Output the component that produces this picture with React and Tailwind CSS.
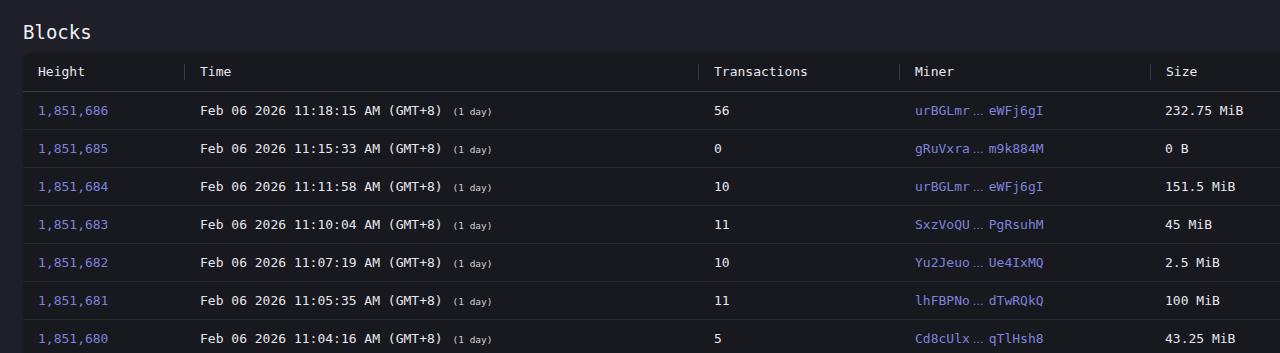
const blocks = [
  { height: '1,851,686', time: 'Feb 06 2026 11:18:15 AM (GMT+8)', txs: '56', minerA: 'urBGLmr', minerB: 'eWFj6gI', size: '232.75 MiB' },
  { height: '1,851,685', time: 'Feb 06 2026 11:15:33 AM (GMT+8)', txs: '0', minerA: 'gRuVxra', minerB: 'm9k884M', size: '0 B' },
  { height: '1,851,684', time: 'Feb 06 2026 11:11:58 AM (GMT+8)', txs: '10', minerA: 'urBGLmr', minerB: 'eWFj6gI', size: '151.5 MiB' },
  { height: '1,851,683', time: 'Feb 06 2026 11:10:04 AM (GMT+8)', txs: '11', minerA: 'SxzVoQU', minerB: 'PgRsuhM', size: '45 MiB' },
  { height: '1,851,682', time: 'Feb 06 2026 11:07:19 AM (GMT+8)', txs: '10', minerA: 'Yu2Jeuo', minerB: 'Ue4IxMQ', size: '2.5 MiB' },
  { height: '1,851,681', time: 'Feb 06 2026 11:05:35 AM (GMT+8)', txs: '11', minerA: 'lhFBPNo', minerB: 'dTwRQkQ', size: '100 MiB' },
  { height: '1,851,680', time: 'Feb 06 2026 11:04:16 AM (GMT+8)', txs: '5', minerA: 'Cd8cUlx', minerB: 'qTlHsh8', size: '43.25 MiB' },
];

const mono = { fontFamily: '"DejaVu Sans Mono", "Liberation Mono", monospace' };

// column widths follow the header separators in the screenshot
const cols = 'grid grid-cols-[161px_514px_201px_251px_172px]';

function HeadCell({ children, first }) {
  return (
    <div className={`flex items-center h-full ${first ? 'pl-[15px]' : ''}`}>
      {!first && <div className="w-px h-4 bg-[#3a3a46] mr-[15px]" />}
      <span>{children}</span>
    </div>
  );
}

export default function App() {
  return (
    <div className="w-[1280px] h-[353px] overflow-hidden bg-[#1f1f29] text-[#e6e6ec]" style={mono}>
      <div className="pl-[23px] pt-[21px]">
        {/* Title */}
        <h1 className="text-[19px] leading-[22px] text-[#f0f0f4] mb-[10px]">Blocks</h1>

        {/* Table */}
        <div className="w-[1300px] bg-[#18181f] rounded-tl-md text-[13px]">
          <div className={`${cols} h-[39px] border-b border-[#3b3b44] text-[#e8e8ee]`}>
            <HeadCell first>Height</HeadCell>
            <HeadCell>Time</HeadCell>
            <HeadCell>Transactions</HeadCell>
            <HeadCell>Miner</HeadCell>
            <HeadCell>Size</HeadCell>
          </div>

          {blocks.map((b) => (
            <div key={b.height} className={`${cols} h-[38px] items-center border-b border-[#272730]`}>
              <span className="pl-[15px] text-[#7f82dc]">{b.height}</span>
              <span className="pl-[16px] whitespace-nowrap">
                {b.time} <span className="text-[9.5px] text-[#cfcfd6] ml-[2px]">(1 day)</span>
              </span>
              <span className="pl-[16px]">{b.txs}</span>
              <span className="pl-[16px] text-[#7f82dc] whitespace-nowrap flex items-baseline">
                <span>{b.minerA}</span>
                <span className="ml-[3px] mr-[5px] text-[11px]" style={{ fontFamily: '"DejaVu Sans", sans-serif' }}>…</span>
                <span>{b.minerB}</span>
              </span>
              <span className="pl-[15px]">{b.size}</span>
            </div>
          ))}
        </div>
      </div>
    </div>
  );
}
